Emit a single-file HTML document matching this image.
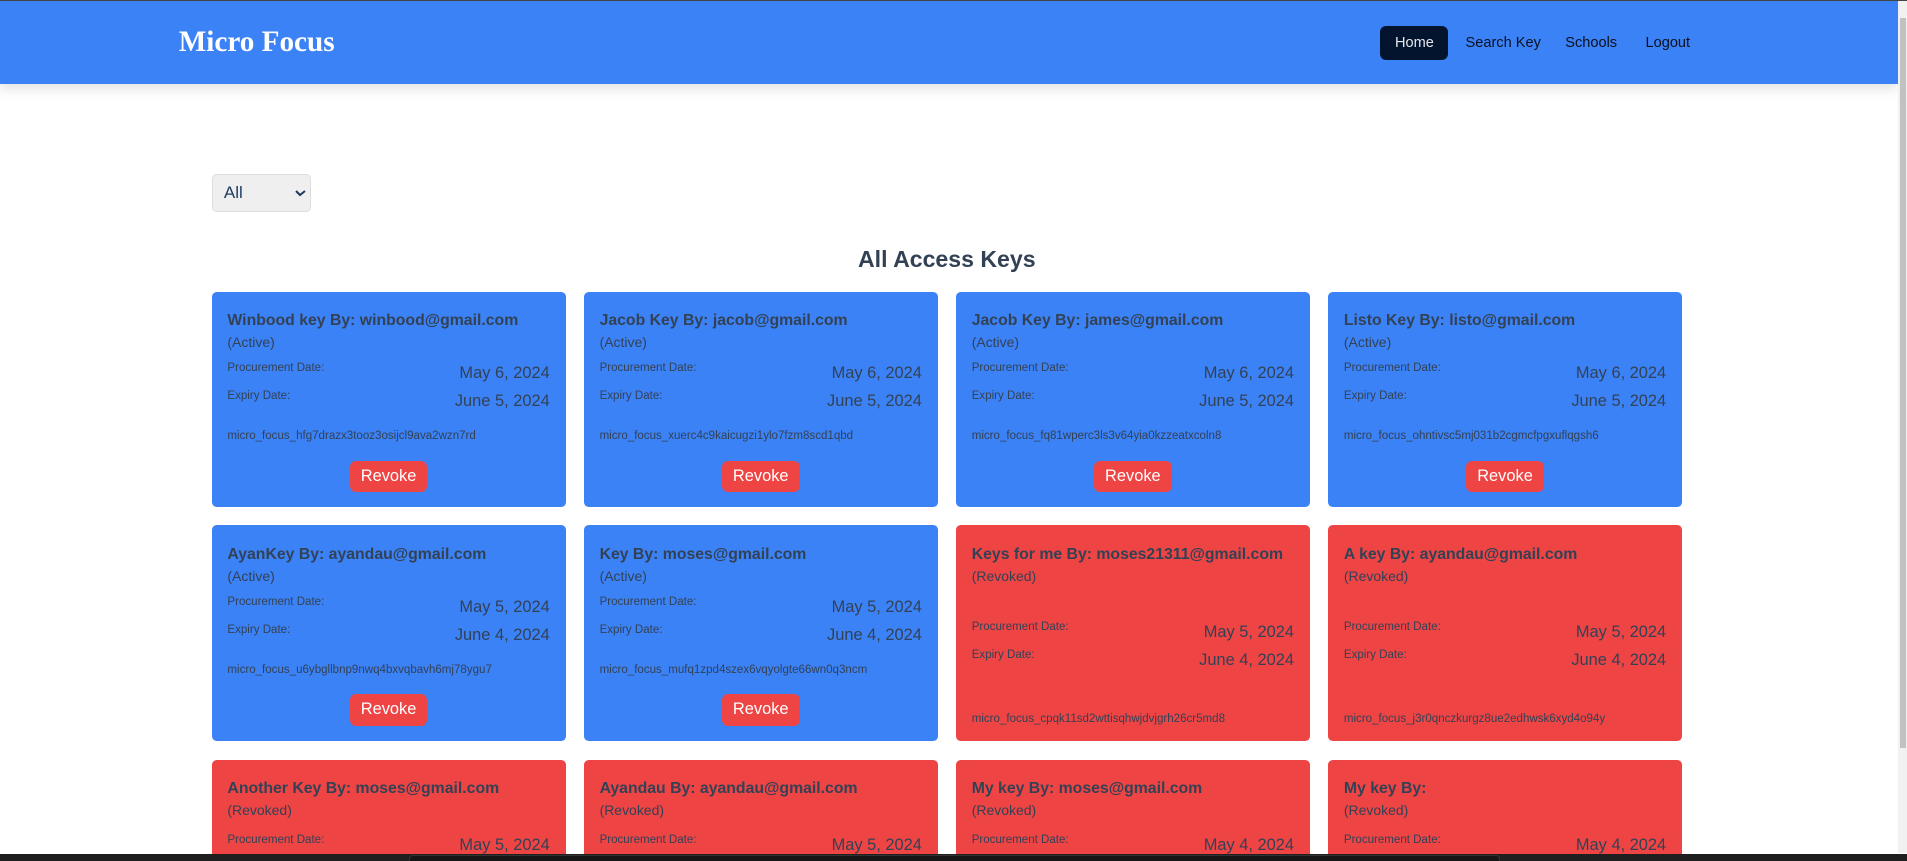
<!DOCTYPE html>
<html><head><meta charset="utf-8"><style>
html,body{margin:0;padding:0;overflow:hidden;background:#fff;height:861px;width:1907px}
#w{zoom:1.21619;width:1568px;height:708px;position:relative;font-family:"Liberation Sans",sans-serif;overflow:hidden}
.top{position:absolute;left:0;top:0;width:1568px;height:1px;background:#444}
nav{position:absolute;left:0;top:1px;width:1561px;height:68px;background:#3b82f6;box-shadow:0 4px 10px rgba(0,0,0,.12)}
.sb{position:absolute;left:1561px;top:1px;width:7px;height:700px;background:#f1f1f1}
.sb:after{content:"";position:absolute;left:1px;top:14px;width:5px;height:600px;background:#c1c1c1}
.logo{position:absolute;left:147px;top:20px;color:#fff;font:bold 24px "Liberation Serif",serif}
.home{position:absolute;left:1135px;top:20px;width:56px;height:28px;border-radius:5px;background:#03142f;color:#e5e7eb;font-size:12px;line-height:28px;text-align:center}
.nl{position:absolute;top:20px;line-height:28px;font-size:12px;color:#0b1020}
select{position:absolute;left:174px;top:143px;width:82px;height:31px;background:#efefef;border:1px solid #ddd;border-radius:4px;font-size:14px;color:#1e3a5f;padding-left:6px;font-family:"Liberation Sans",sans-serif}
h2{position:absolute;left:0;width:1557px;top:201px;margin:0;text-align:center;font-size:19px;color:#334155;line-height:26px}
.card{position:absolute;width:291px;height:177px;border-radius:4px;box-sizing:border-box;padding:15px 13px 0;color:#334155;background:#3b82f6}
.r{background:#ef4444}
.t{font-weight:bold;font-size:13px;line-height:18px;white-space:nowrap}
.s{font-size:11.5px;line-height:16px;margin-top:1px}
.row{display:flex;justify-content:space-between;height:20px;margin-top:7px}
.row+.row{margin-top:3px}
.l{font-size:9.5px;line-height:12px}
.d{font-size:13.5px;line-height:20px}
.k{font-size:9.5px;line-height:14px;margin-top:12px;white-space:nowrap}
.b{display:block;margin:13px auto 0;width:64px;height:26px;border-radius:5px;background:#ef4444;color:#fff;font-size:13.5px;line-height:26px;text-align:center}
.x .first{margin-top:28px}
.x .k{margin-top:32px}
.bot{position:absolute;left:0;top:702px;width:1568px;height:6px;background:#1f1f1f}
.bot:after{content:"";position:absolute;left:336px;top:1px;width:896px;height:5px;background:#161616;border:1px solid #333;border-bottom:0;border-radius:3px 3px 0 0}
</style></head><body><div id="w">
<div class="top"></div>
<nav><div class="logo">Micro Focus</div>
<div class="home">Home</div>
<div class="nl" style="left:1205px">Search Key</div>
<div class="nl" style="left:1287px">Schools</div>
<div class="nl" style="left:1353px">Logout</div></nav>
<div class="sb"></div>
<select><option>All</option></select>
<h2>All Access Keys</h2>

<div class="card" style="left:174px;top:240px"><div class="t">Winbood key By: winbood@gmail.com</div><div class="s">(Active)</div><div class="row"><span class="l">Procurement Date:</span><span class="d">May 6, 2024</span></div><div class="row"><span class="l">Expiry Date:</span><span class="d">June 5, 2024</span></div><div class="k">micro_focus_hfg7drazx3tooz3osijcl9ava2wzn7rd</div><span class="b">Revoke</span></div>
<div class="card" style="left:480px;top:240px"><div class="t">Jacob Key By: jacob@gmail.com</div><div class="s">(Active)</div><div class="row"><span class="l">Procurement Date:</span><span class="d">May 6, 2024</span></div><div class="row"><span class="l">Expiry Date:</span><span class="d">June 5, 2024</span></div><div class="k">micro_focus_xuerc4c9kaicugzi1ylo7fzm8scd1qbd</div><span class="b">Revoke</span></div>
<div class="card" style="left:786px;top:240px"><div class="t">Jacob Key By: james@gmail.com</div><div class="s">(Active)</div><div class="row"><span class="l">Procurement Date:</span><span class="d">May 6, 2024</span></div><div class="row"><span class="l">Expiry Date:</span><span class="d">June 5, 2024</span></div><div class="k">micro_focus_fq81wperc3ls3v64yia0kzzeatxcoln8</div><span class="b">Revoke</span></div>
<div class="card" style="left:1092px;top:240px"><div class="t">Listo Key By: listo@gmail.com</div><div class="s">(Active)</div><div class="row"><span class="l">Procurement Date:</span><span class="d">May 6, 2024</span></div><div class="row"><span class="l">Expiry Date:</span><span class="d">June 5, 2024</span></div><div class="k">micro_focus_ohntivsc5mj031b2cgmcfpgxuflqgsh6</div><span class="b">Revoke</span></div>

<div class="card" style="left:174px;top:432px"><div class="t">AyanKey By: ayandau@gmail.com</div><div class="s">(Active)</div><div class="row"><span class="l">Procurement Date:</span><span class="d">May 5, 2024</span></div><div class="row"><span class="l">Expiry Date:</span><span class="d">June 4, 2024</span></div><div class="k">micro_focus_u6ybgllbnp9nwq4bxvqbavh6mj78ygu7</div><span class="b">Revoke</span></div>
<div class="card" style="left:480px;top:432px"><div class="t">Key By: moses@gmail.com</div><div class="s">(Active)</div><div class="row"><span class="l">Procurement Date:</span><span class="d">May 5, 2024</span></div><div class="row"><span class="l">Expiry Date:</span><span class="d">June 4, 2024</span></div><div class="k">micro_focus_mufq1zpd4szex6vqyolgte66wn0q3ncm</div><span class="b">Revoke</span></div>
<div class="card r x" style="left:786px;top:432px"><div class="t">Keys for me By: moses21311@gmail.com</div><div class="s">(Revoked)</div><div class="row first"><span class="l">Procurement Date:</span><span class="d">May 5, 2024</span></div><div class="row"><span class="l">Expiry Date:</span><span class="d">June 4, 2024</span></div><div class="k">micro_focus_cpqk11sd2wttisqhwjdvjgrh26cr5md8</div></div>
<div class="card r x" style="left:1092px;top:432px"><div class="t">A key By: ayandau@gmail.com</div><div class="s">(Revoked)</div><div class="row first"><span class="l">Procurement Date:</span><span class="d">May 5, 2024</span></div><div class="row"><span class="l">Expiry Date:</span><span class="d">June 4, 2024</span></div><div class="k">micro_focus_j3r0qnczkurgz8ue2edhwsk6xyd4o94y</div></div>

<div class="card r" style="left:174px;top:625px"><div class="t">Another Key By: moses@gmail.com</div><div class="s">(Revoked)</div><div class="row" style="margin-top:10px"><span class="l">Procurement Date:</span><span class="d">May 5, 2024</span></div></div>
<div class="card r" style="left:480px;top:625px"><div class="t">Ayandau By: ayandau@gmail.com</div><div class="s">(Revoked)</div><div class="row" style="margin-top:10px"><span class="l">Procurement Date:</span><span class="d">May 5, 2024</span></div></div>
<div class="card r" style="left:786px;top:625px"><div class="t">My key By: moses@gmail.com</div><div class="s">(Revoked)</div><div class="row" style="margin-top:10px"><span class="l">Procurement Date:</span><span class="d">May 4, 2024</span></div></div>
<div class="card r" style="left:1092px;top:625px"><div class="t">My key By:</div><div class="s">(Revoked)</div><div class="row" style="margin-top:10px"><span class="l">Procurement Date:</span><span class="d">May 4, 2024</span></div></div>
<div class="bot"></div>
</div></body></html>
